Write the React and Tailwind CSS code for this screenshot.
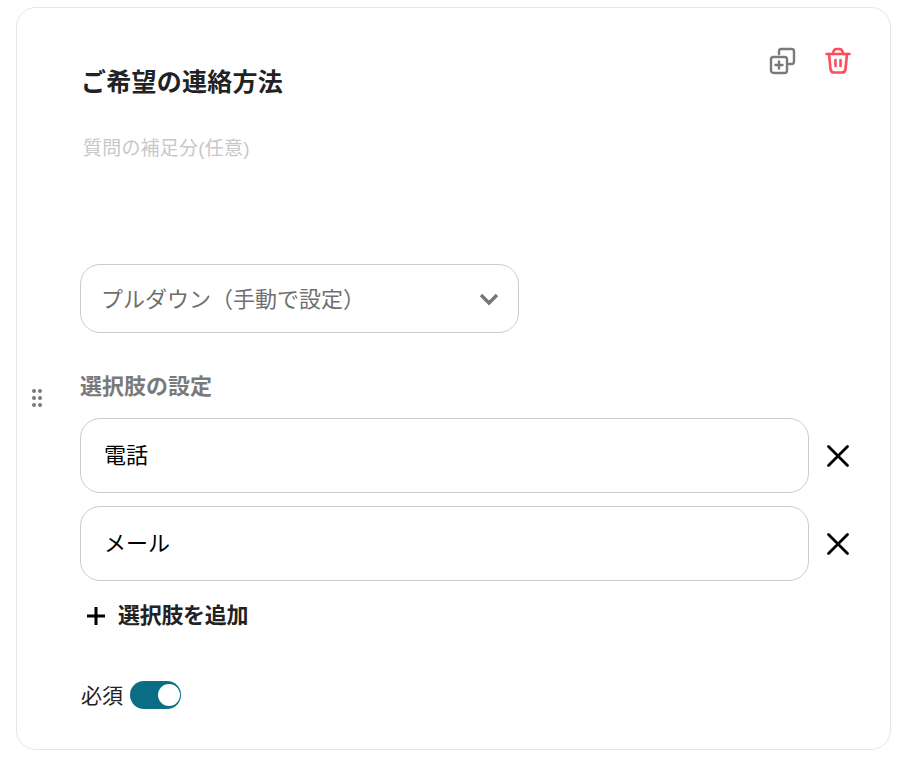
import React from "react";

const CopyIcon = () => (
  <svg width="28" height="28" viewBox="0 0 28 28" fill="none" stroke="#7a7a7a" strokeWidth="2.4" strokeLinecap="round" strokeLinejoin="round">
    <path d="M10 7V4.5C10 3.1 11.1 2 12.5 2h10C23.900 2 25 3.100 25 4.500v10c0 1.400-1.100 2.500-2.500 2.500H20" />
    <rect x="2" y="10" width="16" height="16" rx="2.5" />
    <path d="M10 14.500v7M6.500 18h7" />
  </svg>
);

const TrashIcon = () => (
  <svg width="28" height="28" viewBox="0 0 28 28" fill="none" stroke="#ff4d5e" strokeWidth="2.6" strokeLinecap="round" strokeLinejoin="round">
    <path d="M2.500 7h23" />
    <path d="M8.500 7l1-2.500C10 3 11 2 12.500 2h3c1.500 0 2.500 1 3 2.500l1 2.500" />
    <path d="M5 7l1.500 15c.2 2 1.500 3.500 3.500 3.500h8c2 0 3.300-1.500 3.500-3.500L23 7" />
    <path d="M11.500 13v6M16.500 13v6" />
  </svg>
);

const CloseIcon = () => (
  <svg width="24" height="24" viewBox="0 0 24 24" fill="none" stroke="#000" strokeWidth="2.8" strokeLinecap="round">
    <path d="M2.500 2.500l19 19M21.500 2.500l-19 19" />
  </svg>
);

const Option = ({ label }) => (
  <div className="flex items-center">
    <div className="w-[729px] h-[75px] flex items-center pl-[23px] border border-[#cccccc] rounded-[20px] text-[22px] text-black bg-white">
      {label}
    </div>
    <button className="ml-[17px] w-6 h-6">
      <CloseIcon />
    </button>
  </div>
);

export default function App() {
  return (
    <div className="px-4 pt-[7px] h-[760px] bg-white font-['Liberation_Sans','Noto_Sans_CJK_JP',sans-serif] text-[#222222]">
      <div className="w-[875px] h-[743px] border border-[#e6e6e6] rounded-[20px] flex items-center">
        <div className="w-[63px] mt-[39px] flex justify-center pr-[23px]">
          <div className="grid grid-cols-2 gap-x-[2px] gap-y-[3px]">
            {[0, 1, 2, 3, 4, 5].map((i) => (
              <span key={i} className="w-[4px] h-[4px] rounded-full bg-[#7a7a7a]" />
            ))}
          </div>
        </div>
        <div className="flex-1 h-full flex flex-col">
          <div className="flex justify-between pt-[39px] pr-[38px] h-[127px]">
            <h2 className="mt-[16px] pl-px text-[25px] leading-[38px] font-bold tracking-[0.25px]">ご希望の連絡方法</h2>
            <div className="flex gap-[27px]">
              <CopyIcon />
              <TrashIcon />
            </div>
          </div>
          <p className="pl-[3px] text-[19px] leading-7 text-[#c8c8c8] tracking-[0.2px]">質問の補足分(任意)</p>
          <div className="mt-[101px] w-[439px] h-[69px] border border-[#cccccc] rounded-[20px] flex items-center justify-between pl-[20px] pr-[19px] text-[22px] text-[#6f6f6f]">
            <span className="translate-y-px">プルダウン（手動で設定）</span>
            <svg width="20" height="14" viewBox="0 0 20 14" fill="none" stroke="#777" strokeWidth="3.4">
              <path d="M2 3l8 8 8-8" />
            </svg>
          </div>
          <p className="mt-[40px] text-[22px] leading-7 font-bold text-[#7a7a7a]">選択肢の設定</p>
          <div className="mt-[17px] flex flex-col gap-[13px]">
            <Option label="電話" />
            <Option label="メール" />
          </div>
          <button className="mt-[21px] flex items-center self-start pl-[6px]">
            <svg width="20" height="20" viewBox="0 0 20 20" stroke="#000" strokeWidth="3">
              <path d="M10 1v18M1 10h18" />
            </svg>
            <span className="ml-3 text-[22px] leading-7 font-bold tracking-[-0.3px]">選択肢を追加</span>
          </button>
          <div className="mt-[51px] flex items-center">
            <span className="text-[21px] leading-7 pl-px translate-y-px">必須</span>
            <div className="ml-[7px] w-[51px] h-7 rounded-full bg-[#0b6c85] flex items-center justify-end pr-px">
              <span className="w-[22px] h-[22px] rounded-full bg-white" />
            </div>
          </div>
        </div>
      </div>
    </div>
  );
}
